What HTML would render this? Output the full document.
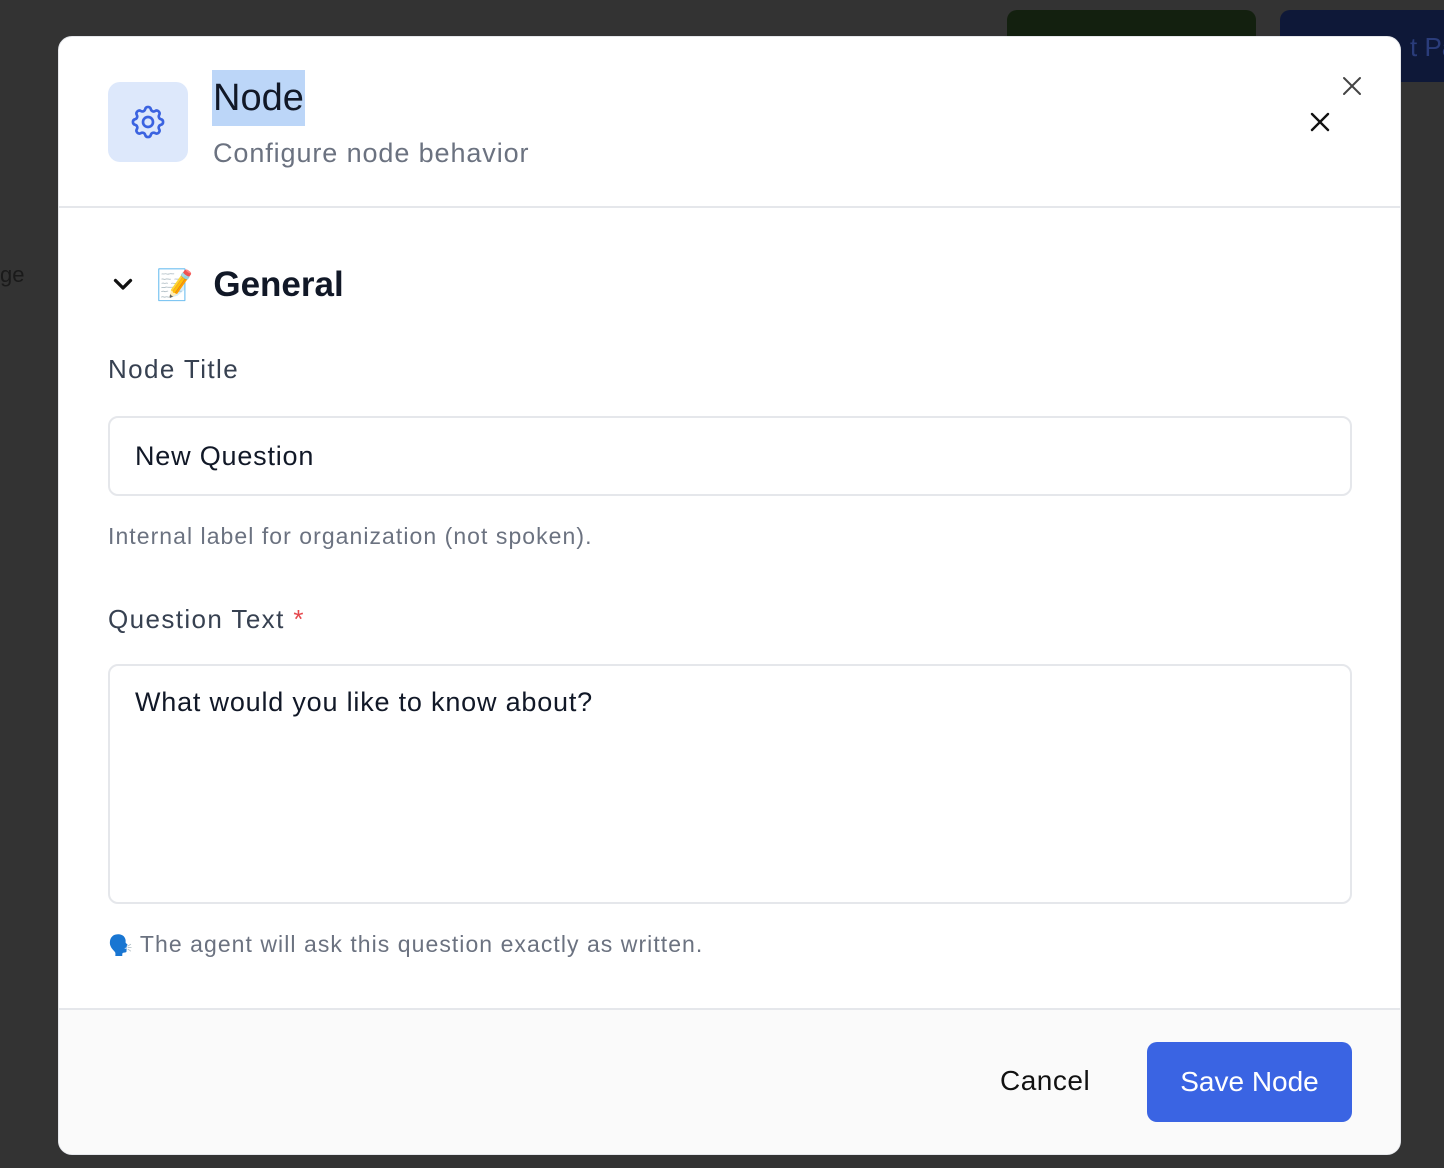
<!DOCTYPE html>
<html><head><style>
*{box-sizing:border-box;margin:0;padding:0}
body{width:1444px;height:1168px;background:#333333;font-family:"Liberation Sans",sans-serif;position:relative;overflow:hidden}
.bg1{position:absolute;left:1007px;top:10px;width:249px;height:70px;background:#13200f;border-radius:10px}
.bg2{position:absolute;left:1280px;top:10px;width:180px;height:72px;background:#0e1838;border-radius:10px;color:#2a3c7a;font-size:26px;padding:22px 0 0 130px}
.ge{position:absolute;left:0;top:262px;color:#1a1a1a;font-size:22px}
.modal{position:absolute;left:58px;top:36px;width:1343px;height:1119px;background:#fff;border-radius:14px;overflow:hidden;border:1px solid #e5e7eb}
.hdr{height:171px;border-bottom:2px solid #e5e7eb;position:relative}
.ico{position:absolute;left:49px;top:45px;width:80px;height:80px;background:#dde8fb;border-radius:12px}
.ico svg{position:absolute;left:20px;top:20px}
.title{position:absolute;left:153px;top:33px;height:56px;background:#bcd6f8;font-size:38px;color:#111827;line-height:56px;padding:0 1px}
.sub{position:absolute;left:154px;top:101px;font-size:27px;color:#6b7280;letter-spacing:0.9px}
.x{position:absolute}
.gen{position:absolute;left:49px;top:223px;height:50px;display:flex;align-items:center}
.gen .t{font-size:35px;font-weight:bold;color:#111827;margin-left:20px}
.lbl{position:absolute;left:49px;font-size:26px;color:#374151;letter-spacing:1.4px}
.inp{position:absolute;left:49px;width:1244px;border:2px solid #e5e7eb;border-radius:10px;font-size:27px;color:#111827;padding-left:25px;letter-spacing:0.8px}
.help{position:absolute;left:49px;font-size:23px;color:#6b7280;letter-spacing:1.05px}
.foot{position:absolute;left:0;top:971px;width:100%;height:148px;background:#fafafa;border-top:2px solid #e5e7eb}
.cancel{position:absolute;left:941px;top:55px;font-size:28px;color:#111;letter-spacing:.5px}
.save{position:absolute;left:1088px;top:32px;width:205px;height:80px;background:#3a64e3;border-radius:10px;color:#fff;font-size:28px;text-align:center;line-height:80px}
</style></head><body>
<div class="bg1"></div><div class="bg2">t Pa</div>
<div class="ge">ge</div>
<div class="modal">
 <div class="hdr">
  <div class="ico"><svg width="40" height="40" viewBox="0 0 24 24" fill="none" stroke="#3b63e0" stroke-width="1.6" stroke-linecap="round" stroke-linejoin="round"><path d="M10.3 4.3c.4-1.8 3-1.8 3.4 0a1.7 1.7 0 0 0 2.6 1.1c1.5-.9 3.3.8 2.4 2.4a1.7 1.7 0 0 0 1 2.5c1.8.4 1.8 3 0 3.4a1.7 1.7 0 0 0-1 2.6c.9 1.5-.9 3.3-2.4 2.4a1.7 1.7 0 0 0-2.6 1c-.4 1.8-3 1.8-3.4 0a1.7 1.7 0 0 0-2.6-1c-1.5.9-3.300-.9-2.4-2.4a1.7 1.7 0 0 0-1-2.6c-1.8-.4-1.8-3 0-3.4a1.7 1.7 0 0 0 1-2.5c-.9-1.6.9-3.3 2.4-2.4 1 .6 2.3.1 2.6-1.1z"/><circle cx="12" cy="12" r="3"/></svg></div>
  <div class="title">Node</div>
  <div class="sub">Configure node behavior</div>
  <svg class="x" style="left:1283px;top:39px" width="20" height="20" viewBox="0 0 20 20" stroke="#444" stroke-width="2" stroke-linecap="round"><path d="M2 2L18 18M18 2L2 18"/></svg>
  <svg class="x" style="left:1251px;top:75px" width="20" height="20" viewBox="0 0 20 20" stroke="#111" stroke-width="2.4" stroke-linecap="round"><path d="M2 2L18 18M18 2L2 18"/></svg>
 </div>
 <div class="gen"><svg width="30" height="30" viewBox="0 0 20 20" fill="none" stroke="#111" stroke-width="2.2" stroke-linecap="round" stroke-linejoin="round"><path d="M5 7l5 5 5-5"/></svg><span style="font-size:30px;margin-left:18px">📝</span><span class="t">General</span></div>
 <div class="lbl" style="top:317px">Node Title</div>
 <div class="inp" style="top:379px;height:80px;line-height:76px">New Question</div>
 <div class="help" style="top:486px">Internal label for organization (not spoken).</div>
 <div class="lbl" style="top:567px">Question Text <span style="color:#e5484d">*</span></div>
 <div class="inp" style="top:627px;height:240px;padding-top:18px;line-height:36px">What would you like to know about?</div>
 <div class="help" style="top:894px"><span style="font-size:20px;letter-spacing:0">🗣️</span> The agent will ask this question exactly as written.</div>
 <div class="foot"><div class="cancel">Cancel</div><div class="save">Save Node</div></div>
</div>
</body></html>
